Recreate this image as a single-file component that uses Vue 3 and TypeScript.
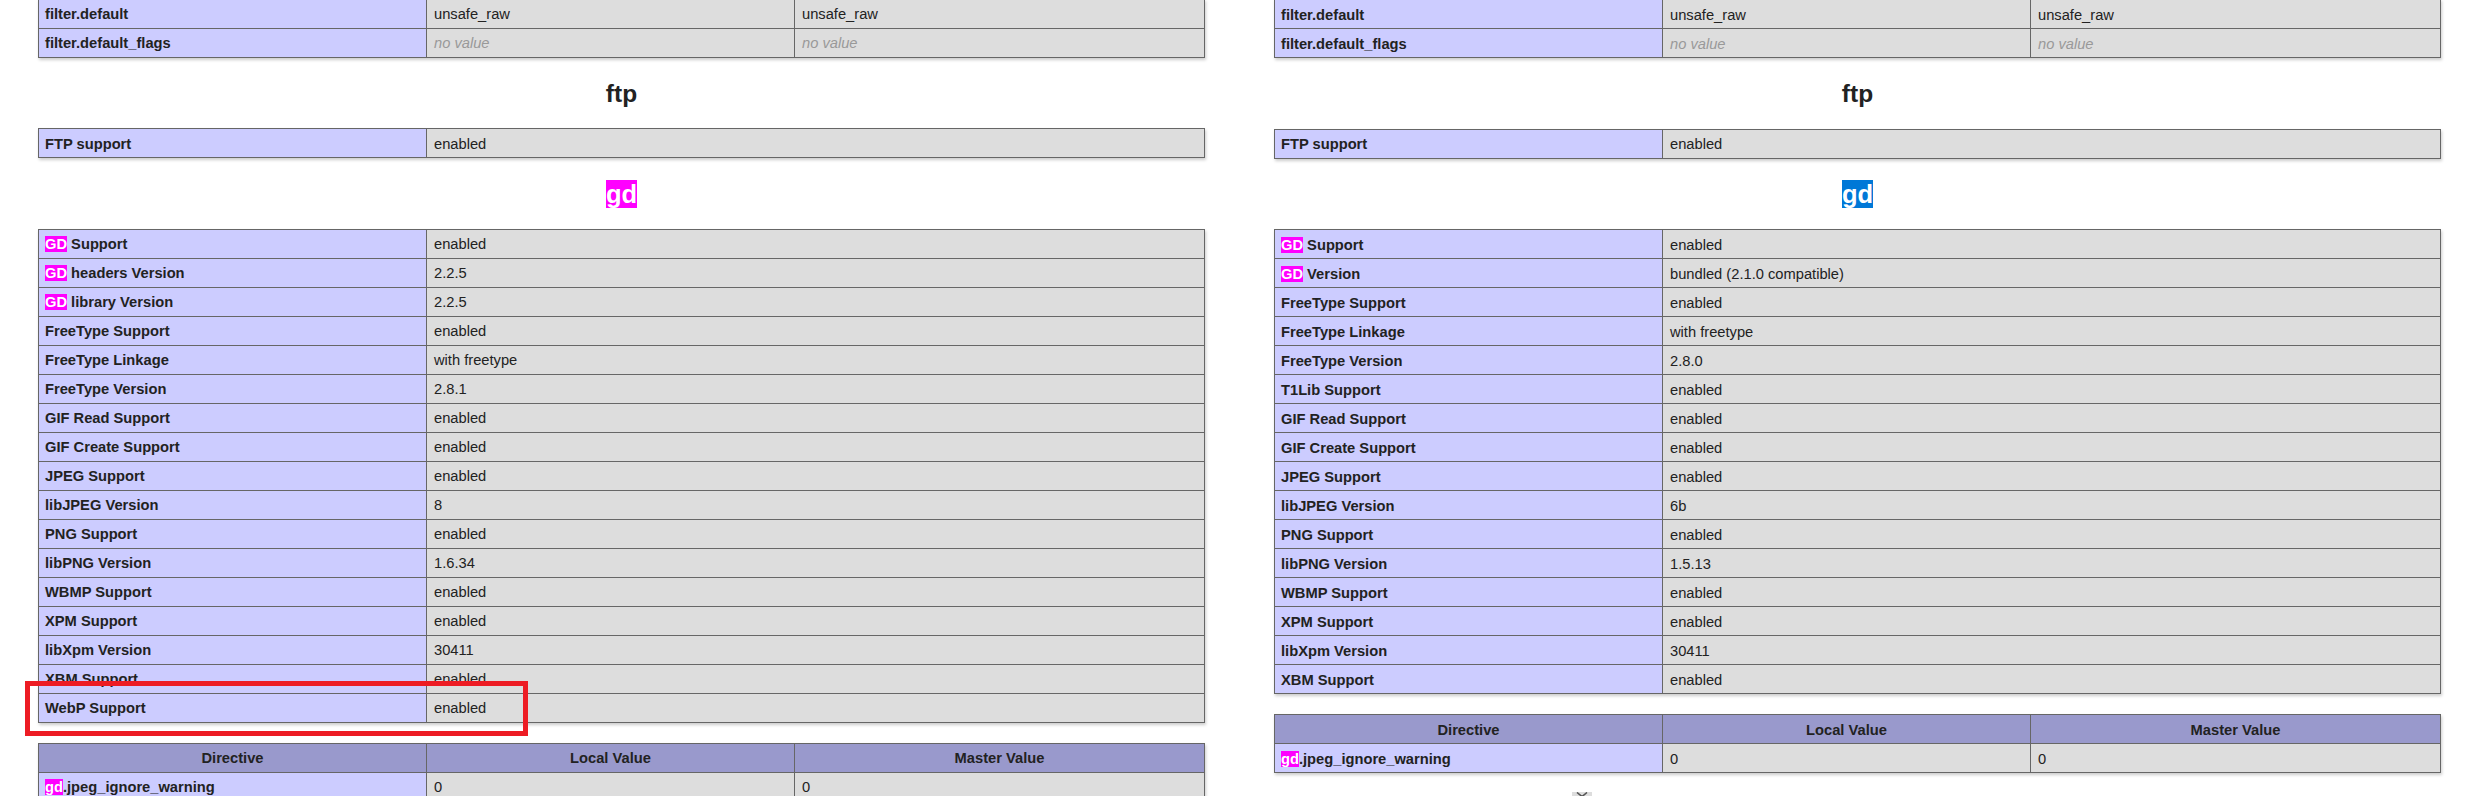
<script setup lang="ts">
type Cell = { badge?: string; text: string };
type Row = { e: Cell; v: string; m?: string };
type Section =
  | { kind: 'heading'; text: string; tone?: string; tightTop?: boolean; tightBottom?: boolean }
  | { kind: 'table'; cols: number; head?: string[]; rows: Row[]; low?: boolean };

const plain = (name: string, v: string): Row => ({ e: { text: name }, v });
const gd = (name: string, v: string): Row => ({ e: { badge: 'GD', text: ' ' + name }, v });

const filterRows: Row[] = [
  { e: { text: 'filter.default' }, v: 'unsafe_raw', m: 'unsafe_raw' },
  { e: { text: 'filter.default_flags' }, v: '', m: '' },
];
const ftpRows: Row[] = [plain('FTP support', 'enabled')];
const directiveHead = ['Directive', 'Local Value', 'Master Value'];
const directiveRows: Row[] = [
  { e: { badge: 'gd', text: '.jpeg_ignore_warning' }, v: '0', m: '0' },
];

const leftGd: Row[] = [
  gd('Support', 'enabled'),
  gd('headers Version', '2.2.5'),
  gd('library Version', '2.2.5'),
  plain('FreeType Support', 'enabled'),
  plain('FreeType Linkage', 'with freetype'),
  plain('FreeType Version', '2.8.1'),
  plain('GIF Read Support', 'enabled'),
  plain('GIF Create Support', 'enabled'),
  plain('JPEG Support', 'enabled'),
  plain('libJPEG Version', '8'),
  plain('PNG Support', 'enabled'),
  plain('libPNG Version', '1.6.34'),
  plain('WBMP Support', 'enabled'),
  plain('XPM Support', 'enabled'),
  plain('libXpm Version', '30411'),
  plain('XBM Support', 'enabled'),
  plain('WebP Support', 'enabled'),
];
const rightGd: Row[] = [
  gd('Support', 'enabled'),
  gd('Version', 'bundled (2.1.0 compatible)'),
  plain('FreeType Support', 'enabled'),
  plain('FreeType Linkage', 'with freetype'),
  plain('FreeType Version', '2.8.0'),
  plain('T1Lib Support', 'enabled'),
  plain('GIF Read Support', 'enabled'),
  plain('GIF Create Support', 'enabled'),
  plain('JPEG Support', 'enabled'),
  plain('libJPEG Version', '6b'),
  plain('PNG Support', 'enabled'),
  plain('libPNG Version', '1.5.13'),
  plain('WBMP Support', 'enabled'),
  plain('XPM Support', 'enabled'),
  plain('libXpm Version', '30411'),
  plain('XBM Support', 'enabled'),
];

const columns: { id: string; sections: Section[] }[] = [
  {
    id: 'left',
    sections: [
      { kind: 'table', cols: 3, rows: filterRows },
      { kind: 'heading', text: 'ftp', tightBottom: true },
      { kind: 'table', cols: 2, rows: ftpRows, low: true },
      { kind: 'heading', text: 'gd', tone: 'magenta' },
      { kind: 'table', cols: 2, rows: leftGd },
      { kind: 'table', cols: 3, head: directiveHead, rows: directiveRows },
    ],
  },
  {
    id: 'right',
    sections: [
      { kind: 'table', cols: 3, rows: filterRows, low: true },
      { kind: 'heading', text: 'ftp' },
      { kind: 'table', cols: 2, rows: ftpRows },
      { kind: 'heading', text: 'gd', tone: 'blue', tightTop: true },
      { kind: 'table', cols: 2, rows: rightGd, low: true },
      { kind: 'table', cols: 3, head: directiveHead, rows: directiveRows, low: true },
    ],
  },
];
</script>

<template>
  <div class="page">
    <div v-for="col in columns" :key="col.id" class="column">
      <template v-for="(s, i) in col.sections" :key="i">
        <h2
          v-if="s.kind === 'heading'"
          class="heading"
          :class="{ 'tight-top': s.tightTop, 'tight-bottom': s.tightBottom }"
        >
          <span :class="s.tone">{{ s.text }}</span>
        </h2>
        <table v-else class="info" :class="{ low: s.low }">
          <colgroup>
            <col class="c1" />
            <col v-if="s.cols === 3" class="c2" />
            <col />
          </colgroup>
          <tr v-if="s.head" class="h">
            <th v-for="h in s.head" :key="h">{{ h }}</th>
          </tr>
          <tr v-for="r in s.rows" :key="r.e.text">
            <td class="e"><span v-if="r.e.badge" class="hl">{{ r.e.badge }}</span>{{ r.e.text }}</td>
            <td class="v"><i v-if="r.v === ''">no value</i>{{ r.v }}</td>
            <td v-if="s.cols === 3" class="v"><i v-if="r.m === ''">no value</i>{{ r.m }}</td>
          </tr>
        </table>
      </template>
    </div>
    <div class="annotation"></div>
    <div class="scroll-chip">
      <svg width="20" height="4" viewBox="0 0 20 4" fill="none" stroke="#555" stroke-width="1.6">
        <path d="M5 0.5 L10 4.5 L15 0.5" />
      </svg>
    </div>
  </div>
</template>

<style scoped>
.page {
  position: relative;
  display: flex;
  gap: 69px;
  box-sizing: border-box;
  width: 2492px;
  height: 796px;
  padding-left: 38px;
  overflow: hidden;
  background: #fff;
  color: #222;
  font-family: "Liberation Sans", Arial, sans-serif;
  font-size: 14.7px;
}
.column {
  flex: 0 0 1167px;
  margin-top: -1px;
}
.heading {
  margin: 22px 0 21px;
  height: 28px;
  text-align: center;
  font-size: 24.5px;
  line-height: 28px;
  font-weight: 700;
}
.heading.tight-top {
  margin-top: 21px;
}
.heading.tight-bottom {
  margin-bottom: 20px;
}
.heading .magenta,
.heading .blue {
  display: inline-block;
  color: #fff;
  font-size: 25.5px;
}
.heading .magenta {
  background: #f0f;
}
.heading .blue {
  background: #0078d7;
}
.info {
  width: 1167px;
  margin-bottom: 20px;
  table-layout: fixed;
  border-collapse: collapse;
  box-shadow: 1px 2px 3px #ccc;
}
.c1 {
  width: 388px;
}
.c2 {
  width: 368px;
}
td,
th {
  box-sizing: border-box;
  height: 29px;
  padding: 0 7px;
  border: 1px solid #666;
  vertical-align: middle;
  white-space: nowrap;
  overflow: hidden;
}
.low td,
.low th {
  padding-top: 2px;
}
th {
  background: #99c;
  font-weight: 700;
  text-align: center;
}
td.e {
  padding-left: 6px;
  background: #ccf;
  font-weight: 700;
}
.v {
  background: #ddd;
}
.v i {
  color: #999;
}
.hl {
  background: #f0f;
  color: #fff;
}
.annotation {
  position: absolute;
  left: 25px;
  top: 681px;
  box-sizing: border-box;
  width: 503px;
  height: 55px;
  border: 5px solid #ed1c24;
}
.scroll-chip {
  position: absolute;
  left: 1572px;
  top: 792px;
  width: 20px;
  height: 4px;
  background: #ddd;
}
.scroll-chip svg {
  display: block;
}
</style>

<style>
html,
body {
  margin: 0;
  overflow: hidden;
}
</style>
